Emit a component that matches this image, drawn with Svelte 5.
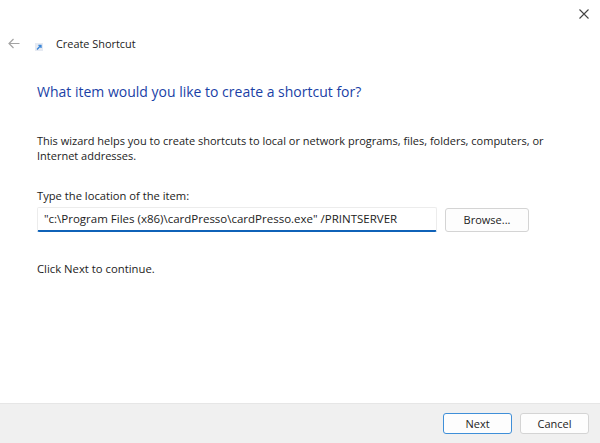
<script>
  const location = '"c:\\Program Files (x86)\\cardPresso\\cardPresso.exe" /PRINTSERVER';
</script>

<div class="window">
  <button class="close" aria-label="Close">
    <svg width="10" height="10" viewBox="0 0 10 10"><path d="M0.5 0.5L9.5 9.5M9.5 0.5L0.5 9.5" stroke="#444" stroke-width="1.1" fill="none" /></svg>
  </button>
  <header class="titlebar">
    <svg class="back" width="12" height="11" viewBox="0 0 12 11"><path d="M11.5 5.5H1M5.5 1L1 5.5L5.5 10" stroke="#a3a3a3" stroke-width="1.2" fill="none" /></svg>
    <svg class="icon" width="8" height="8" viewBox="0 0 8 8"><rect width="8" height="8" fill="#e6eaf2" /><path d="M2 6.5L5.7 2.5M3.4 2.3H6V5" stroke="#3a86d8" stroke-width="1.3" fill="none" /></svg>
    <span class="title">Create Shortcut</span>
  </header>
  <main class="content">
    <h1>What item would you like to create a shortcut for?</h1>
    <p class="intro">This wizard helps you to create shortcuts to local or network programs, files, folders, computers, or<br />Internet addresses.</p>
    <label for="loc">Type the location of the item:</label>
    <div class="row">
      <input id="loc" value={location} />
      <button class="btn browse">Browse...</button>
    </div>
    <p class="hint">Click Next to continue.</p>
  </main>
  <footer>
    <button class="btn primary">Next</button>
    <button class="btn">Cancel</button>
  </footer>
</div>

<style>
  :global(body) { margin: 0; background: #fff; }
  .window {
    position: relative;
    width: 600px;
    height: 443px;
    display: flex;
    flex-direction: column;
    overflow: hidden;
    font-family: "Open Sans", "Noto Sans", sans-serif;
    font-size: 11px;
    color: #1c1c1c;
    background: #fff;
  }
  .close {
    position: absolute;
    top: 9px;
    right: 11px;
    width: 10px;
    height: 10px;
    padding: 0;
    border: 0;
    background: none;
    display: flex;
  }
  .titlebar {
    display: flex;
    align-items: center;
    height: 24px;
    margin-top: 31px;
    padding-left: 8px;
    flex: none;
  }
  .back { margin-right: 15px; }
  .icon { margin-top: 7px; margin-right: 13px; }
  .title { font-size: 10.9px; color: #1c1c1c; }
  .content { flex: 1; padding-left: 37px; padding-right: 30px; }
  h1 {
    margin: 26px 0 0;
    font-size: 14px;
    font-weight: 400;
    line-height: 21px;
    color: #1a3fa6;
  }
  .intro { margin: 31px 0 0; line-height: 15px; }
  label { display: block; margin-top: 25px; line-height: 15px; font-size: 11.2px; }
  .row { display: flex; align-items: center; gap: 8px; margin-top: 4px; }
  input {
    box-sizing: border-box;
    width: 400px;
    height: 25px;
    padding: 0 6px 2px;
    border: 1px solid #ececec;
    border-bottom: 2px solid #0f62b8;
    border-radius: 2px;
    font: inherit;
    font-size: 11.5px;
    color: #1c1c1c;
    background: #fff;
    outline: none;
  }
  .btn {
    box-sizing: border-box;
    width: 69px;
    height: 21px;
    padding: 0;
    border: 1px solid #d4d4d4;
    border-radius: 3px;
    background: #fdfdfd;
    font: inherit;
    color: #1c1c1c;
  }
  .browse { width: 84px; height: 24px; }
  .hint { margin: 29px 0 0; line-height: 15px; font-size: 11.3px; }
  footer {
    flex: none;
    box-sizing: border-box;
    height: 40px;
    display: flex;
    justify-content: flex-end;
    align-items: center;
    gap: 8px;
    padding-right: 11px;
    background: #f0f0f0;
    border-top: 1px solid #e6e6e6;
  }
  .primary { border: 1px solid #3f8fd8; }
</style>
